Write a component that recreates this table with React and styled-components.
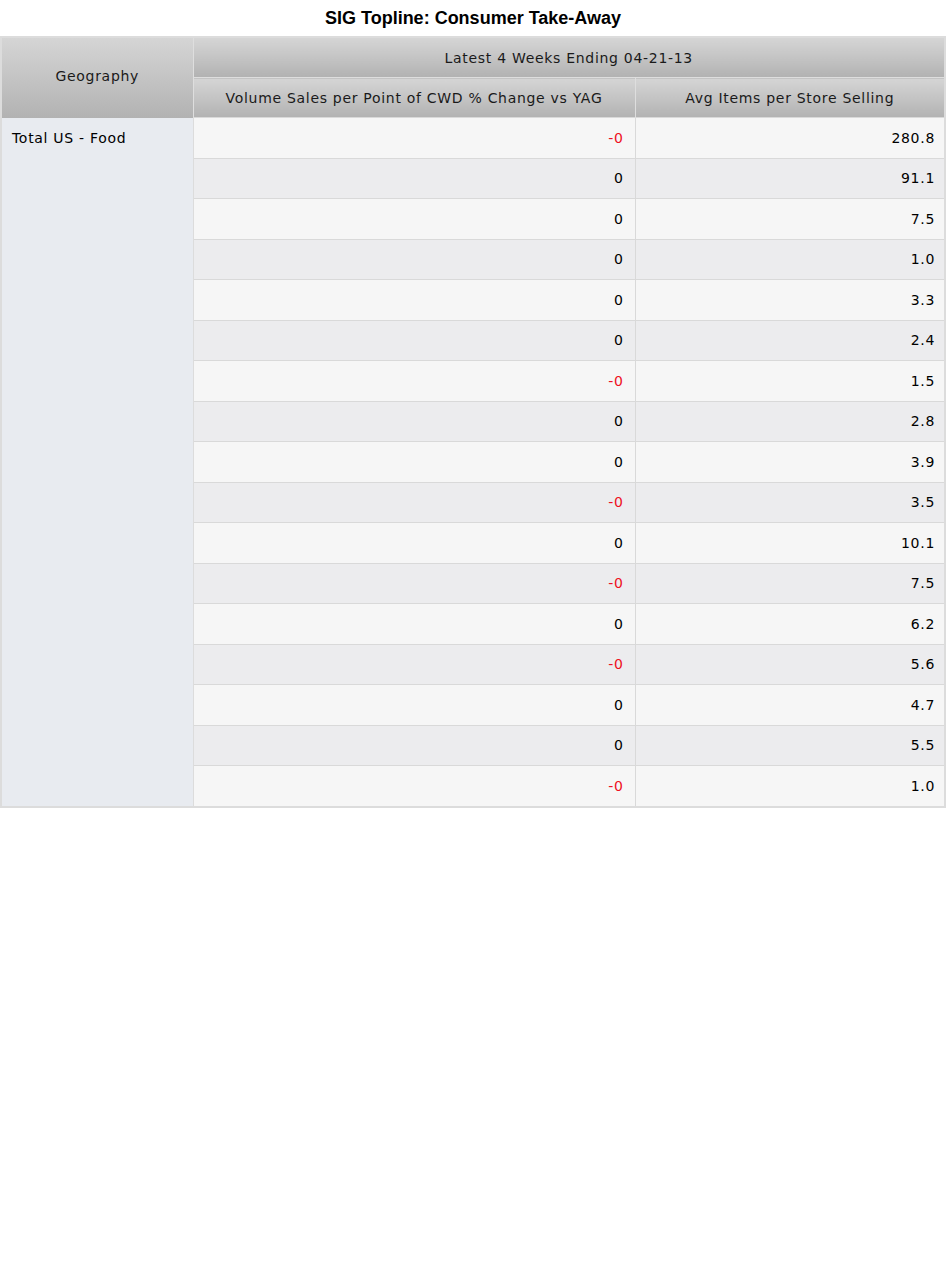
import styled, { createGlobalStyle } from 'styled-components'

const GlobalStyle = createGlobalStyle`
	html, body {
		margin: 0;
		padding: 0;
		background: #fff;
	}
`

const Title = styled.h1`
	margin: 0;
	height: 36px;
	line-height: 36px;
	text-align: center;
	font-family: 'Liberation Sans', Arial, sans-serif;
	font-size: 18px;
	font-weight: bold;
	color: #000;
`

const Table = styled.table`
	width: 946px;
	border-collapse: collapse;
	table-layout: fixed;
	border: 2px solid #dcdcdc;
	font-family: 'DejaVu Sans', Verdana, sans-serif;
	font-size: 14px;
	letter-spacing: 0.7px;
	color: #111;
`

const HeadCell = styled.th`
	height: 39px;
	padding: 0 8px ${(props) => (props.$geo ? '3px' : '0')};
	font-weight: normal;
	text-align: center;
	vertical-align: middle;
	color: #1a1a1a;
	background: linear-gradient(to bottom, #d5d5d5 0%, #c4c4c4 50%, #b2b2b2 100%);
	border-left: 1px solid #dedede;
	border-right: 1px solid #dedede;
	border-top: ${(props) => (props.$sub ? '1px solid #dedede' : 'none')};
`

const GeoCell = styled.td`
	vertical-align: top;
	padding: 12px 10px 0 10px;
	background: #e8ebf0;
	border-right: 1px solid #dcdcdc;
	color: #000;
`

const ValueCell = styled.td`
	height: 39.5px;
	padding: 0 ${(props) => (props.$last ? '9px' : '11px')} 0 8px;
	text-align: right;
	vertical-align: middle;
	background: ${(props) => (props.$alt ? '#ececee' : '#f6f6f6')};
	border: 1px solid #d9d9d9;
	color: ${(props) => (props.$neg ? '#ee1122' : '#000')};
`

const rows = [
	['-0', '280.8'],
	['0', '91.1'],
	['0', '7.5'],
	['0', '1.0'],
	['0', '3.3'],
	['0', '2.4'],
	['-0', '1.5'],
	['0', '2.8'],
	['0', '3.9'],
	['-0', '3.5'],
	['0', '10.1'],
	['-0', '7.5'],
	['0', '6.2'],
	['-0', '5.6'],
	['0', '4.7'],
	['0', '5.5'],
	['-0', '1.0'],
]

const App = () => {
	return (
		<>
			<GlobalStyle />
			<Title>SIG Topline: Consumer Take-Away</Title>
			<Table>
				<colgroup>
					<col style={{ width: 192 }} />
					<col style={{ width: 442 }} />
					<col />
				</colgroup>
				<thead>
					<tr>
						<HeadCell rowSpan={2} $geo>Geography</HeadCell>
						<HeadCell colSpan={2}>Latest 4 Weeks Ending 04-21-13</HeadCell>
					</tr>
					<tr>
						<HeadCell $sub>Volume Sales per Point of CWD % Change vs YAG</HeadCell>
						<HeadCell $sub>Avg Items per Store Selling</HeadCell>
					</tr>
				</thead>
				<tbody>
					{rows.map((row, i) => (
						<tr key={i}>
							{i === 0 && (
								<GeoCell rowSpan={rows.length}>Total US - Food</GeoCell>
							)}
							<ValueCell $alt={i % 2 === 1} $neg={row[0].startsWith('-')}>
								{row[0]}
							</ValueCell>
							<ValueCell $alt={i % 2 === 1} $last>
								{row[1]}
							</ValueCell>
						</tr>
					))}
				</tbody>
			</Table>
		</>
	)
}

export default App
